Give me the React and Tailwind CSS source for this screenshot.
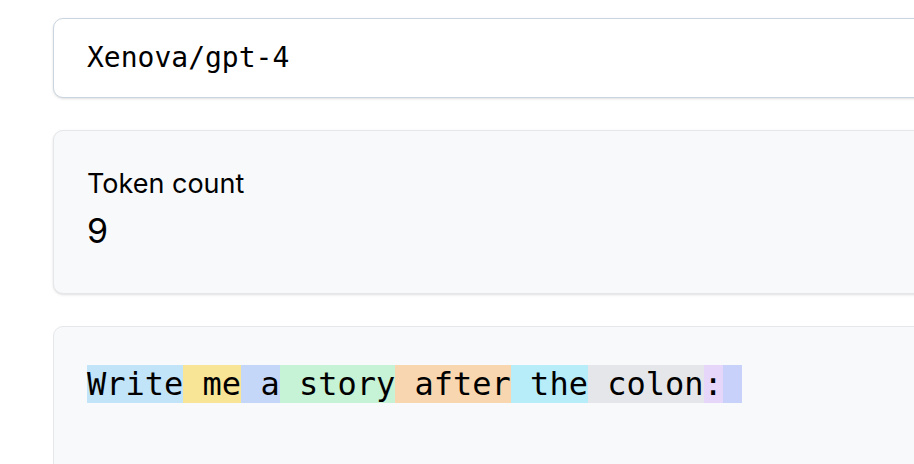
import React from 'react';

const tokens = [
    { text: 'Write', color: 'bg-[#c2e4f8]' },
    { text: ' me', color: 'bg-[#f9e596]' },
    { text: ' a', color: 'bg-[#c5d7f8]' },
    { text: ' story', color: 'bg-[#c6f2d5]' },
    { text: ' after', color: 'bg-[#f8d7b0]' },
    { text: ' the', color: 'bg-[#b6edf8]' },
    { text: ' colon', color: 'bg-[#e5e6ea]' },
    { text: ':', color: 'bg-[#e6d6fa]' },
    { text: ' ', color: 'bg-[#c8d1fa]' }
];

export default function App() {
    return (
        <div className="w-[914px] h-[464px] overflow-hidden bg-white">
            <div className="ml-[53px] w-[1000px] pt-[18px] flex flex-col gap-[32px]">
                {/* Model input */}
                <div className="h-[80px] rounded-[10px] border border-[#cbd5e1] bg-white shadow-sm flex items-center px-[33px]">
                    <span className="font-['DejaVu_Sans_Mono',monospace] text-[28px] text-black">Xenova/gpt-4</span>
                </div>

                {/* Token count */}
                <div className="h-[164px] rounded-[10px] border border-[#e5e7eb] bg-[#f8f9fb] shadow-sm px-[33px] pt-[36px] font-['Inter',sans-serif] text-black">
                    <div className="text-[27px] leading-[34px]">Token count</div>
                    <div className="text-[34px] leading-[44px] mt-[8px]">9</div>
                </div>

                {/* Tokens */}
                <div className="h-[200px] rounded-[10px] border border-[#e5e7eb] bg-[#f8f9fb] px-[33px] pt-[33px]">
                    <div className="font-['DejaVu_Sans_Mono',monospace] text-[32px] leading-[48px] text-black whitespace-pre">
                        {tokens.map((t, i) => (
                            <span key={i} className={t.color}>{t.text}</span>
                        ))}
                    </div>
                </div>
            </div>
        </div>
    );
}
